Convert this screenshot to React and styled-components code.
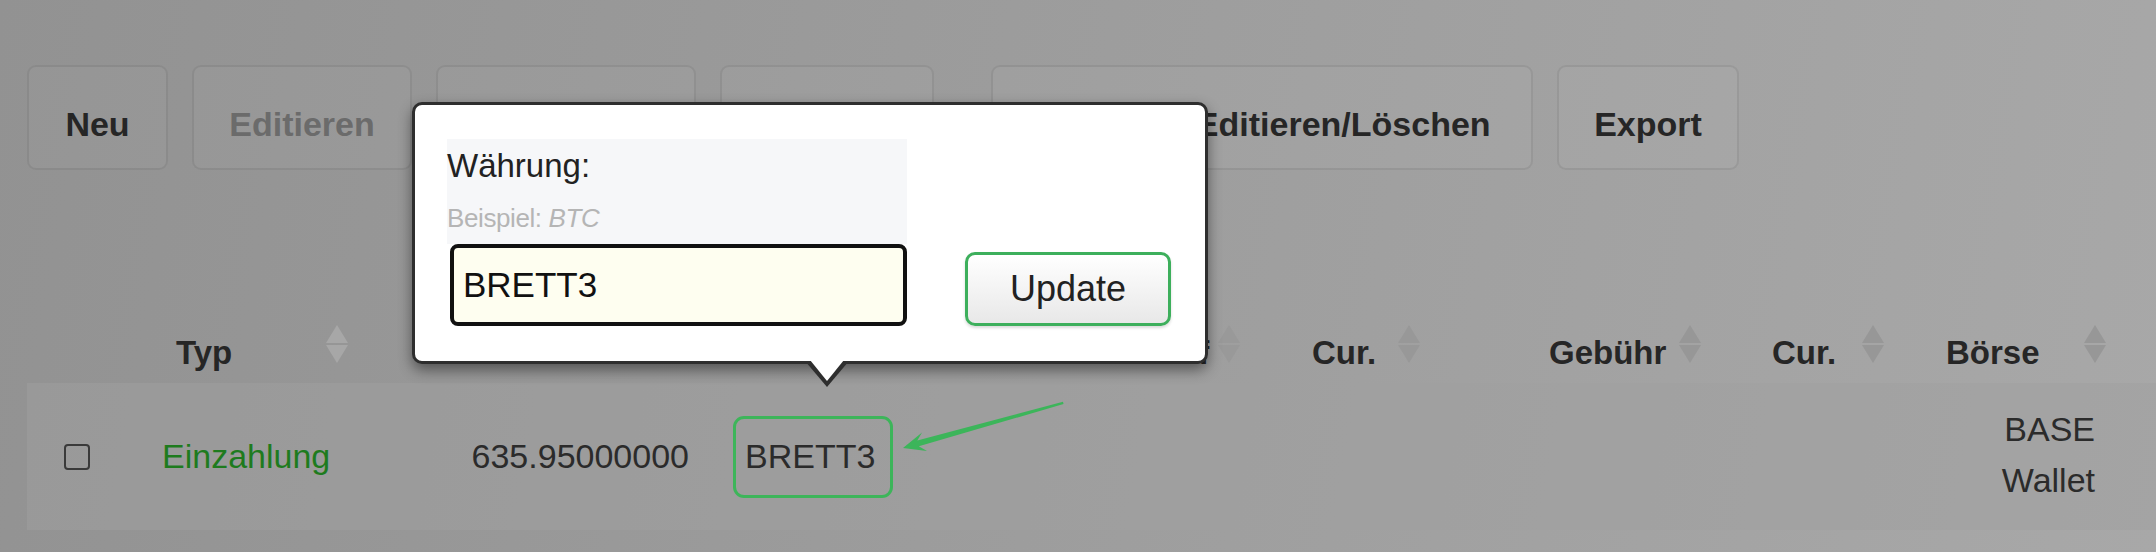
import React from "react";
import styled, { createGlobalStyle } from "styled-components";

const GlobalStyle = createGlobalStyle`
  html, body {
    margin: 0;
    padding: 0;
  }
  body {
    font-family: "Liberation Sans", Arial, sans-serif;
    background: #9c9c9c;
  }
`;

const COLS = "108px 225px 350px 210px 332px 180px 281px 183px 222px 1fr";

const Page = styled.div`
  position: relative;
  width: 2156px;
  height: 552px;
  box-sizing: border-box;
  padding-top: 65px;
  overflow: hidden;
  background: linear-gradient(100deg, #929292 0%, #9c9c9c 45%, #a8a8a8 100%);
`;

const Toolbar = styled.div`
  display: flex;
  gap: 57px;
  padding-left: 27px;
`;

const ButtonGroup = styled.div`
  display: flex;
  gap: 24px;
`;

const ToolButton = styled.div`
  width: ${(p) => p.$w}px;
  height: 105px;
  box-sizing: border-box;
  display: flex;
  align-items: center;
  justify-content: center;
  padding-top: 14px;
  border: 2px solid rgba(0, 0, 0, 0.08);
  border-radius: 9px;
  background: rgba(255, 255, 255, 0.035);
  font-size: 34px;
  font-weight: bold;
  color: ${(p) => (p.$disabled ? "#6b6b6b" : "#262626")};
  white-space: nowrap;
  overflow: hidden;
`;

const Table = styled.div`
  margin: 130px 0 0 27px;
`;

const HeaderRow = styled.div`
  display: grid;
  grid-template-columns: ${COLS};
  height: 83px;
`;

const HeadCell = styled.div`
  display: flex;
  align-items: flex-end;
  box-sizing: border-box;
  padding-left: ${(p) => p.$indent || 0}px;
  padding-bottom: 11px;
  font-size: 33px;
  font-weight: bold;
  color: #262626;
  white-space: nowrap;
`;

const SortIcon = styled.svg`
  margin-left: auto;
  margin-right: 12px;
  margin-bottom: 9px;
  flex-shrink: 0;
  fill: ${(p) => p.$tone};
`;

const DataRow = styled.div`
  display: grid;
  grid-template-columns: ${COLS};
  height: 147px;
  align-items: center;
  background: rgba(160, 160, 160, 0.5);
  font-size: 34px;
  color: #2b2b2b;
`;

const Cell = styled.div`
  box-sizing: border-box;
  padding-left: ${(p) => p.$indent || 0}px;
  padding-right: ${(p) => p.$pr || 0}px;
  text-align: ${(p) => (p.$right ? "right" : "left")};
  line-height: ${(p) => (p.$stack ? "51px" : "normal")};
  margin-top: ${(p) => (p.$stack ? "-4px" : "0")};
  color: ${(p) => p.$color || "inherit"};
  white-space: nowrap;
`;

const CheckBox = styled.div`
  width: 26px;
  height: 26px;
  box-sizing: border-box;
  border: 2px solid #3a3a3a;
  border-radius: 4px;
`;

const Highlight = styled.div`
  display: flex;
  align-items: center;
  width: 160px;
  height: 82px;
  box-sizing: border-box;
  padding-left: 9px;
  border: 3px solid #3db55a;
  border-radius: 11px;
`;

const Popover = styled.div`
  position: absolute;
  left: 412px;
  top: 102px;
  width: 796px;
  height: 262px;
  box-sizing: border-box;
  display: flex;
  align-items: flex-end;
  padding: 34px 34px 35px 32px;
  background: #fff;
  border: 3px solid #2e2e2e;
  border-radius: 10px;
  box-shadow: 0 6px 14px rgba(0, 0, 0, 0.45);

  &::before,
  &::after {
    content: "";
    position: absolute;
    width: 0;
    height: 0;
  }
  &::before {
    left: 390px;
    top: 100%;
    border-left: 22px solid transparent;
    border-right: 22px solid transparent;
    border-top: 26px solid #2e2e2e;
  }
  &::after {
    left: 395px;
    top: calc(100% - 1px);
    border-left: 17px solid transparent;
    border-right: 17px solid transparent;
    border-top: 21px solid #fff;
  }
`;

const Field = styled.div`
  display: flex;
  flex-direction: column;
  width: 460px;
`;

const Hint = styled.div`
  height: 105px;
  box-sizing: border-box;
  padding-top: 8px;
  background: #f6f7f9;
`;

const Label = styled.div`
  font-size: 33px;
  line-height: 37px;
  color: #222;
`;

const Example = styled.div`
  margin-top: 20px;
  font-size: 26px;
  line-height: 29px;
  letter-spacing: -0.4px;
  color: #b5b5b5;

  em {
    font-style: italic;
  }
`;

const TextInput = styled.input`
  width: 457px;
  height: 82px;
  margin-left: 3px;
  box-sizing: border-box;
  padding: 0 0 0 9px;
  border: 4px solid #111;
  border-radius: 8px;
  background: #fefef0;
  font-family: "Liberation Sans", Arial, sans-serif;
  font-size: 35px;
  color: #111;
  outline: none;
`;

const UpdateButton = styled.button`
  width: 206px;
  height: 74px;
  margin-left: 58px;
  box-sizing: border-box;
  border: 3px solid #3daf5c;
  border-radius: 10px;
  background: linear-gradient(#ffffff, #e8e8e8);
  box-shadow: 0 2px 3px rgba(0, 0, 0, 0.15);
  font-family: "Liberation Sans", Arial, sans-serif;
  font-size: 36px;
  color: #222;
`;

const Pointer = styled.svg`
  position: absolute;
  left: 895px;
  top: 395px;
`;

const Sort = ({ tone }) => (
  <SortIcon width="22" height="38" viewBox="0 0 22 38" $tone={tone}>
    <polygon points="11,0 22,18 0,18" />
    <polygon points="0,20 22,20 11,38" />
  </SortIcon>
);

const headers = [
  { label: "", indent: 0 },
  { label: "Typ", indent: 41, tone: "#a7a7a7" },
  { label: "Kauf", indent: 237, tone: "#a3a3a3" },
  { label: "Cur.", indent: 65, tone: "#a1a1a1" },
  { label: "Verkauf", indent: 170, tone: "#999999" },
  { label: "Cur.", indent: 60, tone: "#989898" },
  { label: "Gebühr", indent: 117, tone: "#979797" },
  { label: "Cur.", indent: 59, tone: "#979797" },
  { label: "Börse", indent: 50, tone: "#979797" },
];

export default function App() {
  return (
    <>
      <GlobalStyle />
      <Page>
        <Toolbar>
          <ButtonGroup>
            <ToolButton $w={141}>Neu</ToolButton>
            <ToolButton $w={220} $disabled>Editieren</ToolButton>
            <ToolButton $w={260}>Importieren</ToolButton>
            <ToolButton $w={214} $disabled>Löschen</ToolButton>
          </ButtonGroup>
          <ButtonGroup>
            <ToolButton $w={542}>Mehrfach-Editieren/Löschen</ToolButton>
            <ToolButton $w={182}>Export</ToolButton>
          </ButtonGroup>
        </Toolbar>

        <Table>
          <HeaderRow>
            {headers.map((h, i) => (
              <HeadCell key={i} $indent={h.indent}>
                {h.label}
                {h.tone && <Sort tone={h.tone} />}
              </HeadCell>
            ))}
          </HeaderRow>
          <DataRow>
            <Cell $indent={37}>
              <CheckBox />
            </Cell>
            <Cell $indent={27} $color="#1e7b1e">Einzahlung</Cell>
            <Cell $right $pr={21}>635.95000000</Cell>
            <Cell $indent={23}>
              <Highlight>BRETT3</Highlight>
            </Cell>
            <Cell />
            <Cell />
            <Cell />
            <Cell />
            <Cell $right $pr={23} $stack>
              BASE
              <br />
              Wallet
            </Cell>
          </DataRow>
        </Table>

        <Popover>
          <Field>
            <Hint>
              <Label>Währung:</Label>
              <Example>
                Beispiel: <em>BTC</em>
              </Example>
            </Hint>
            <TextInput defaultValue="BRETT3" readOnly />
          </Field>
          <UpdateButton>Update</UpdateButton>
        </Popover>

        <Pointer width="180" height="65" viewBox="895 395 180 65">
          <polygon
            points="903,448 922,432.5 917.3,440.6 1063,401.8 1063.5,404 918.8,446.3 927,451"
            fill="#3cb55a"
          />
        </Pointer>
      </Page>
    </>
  );
}
